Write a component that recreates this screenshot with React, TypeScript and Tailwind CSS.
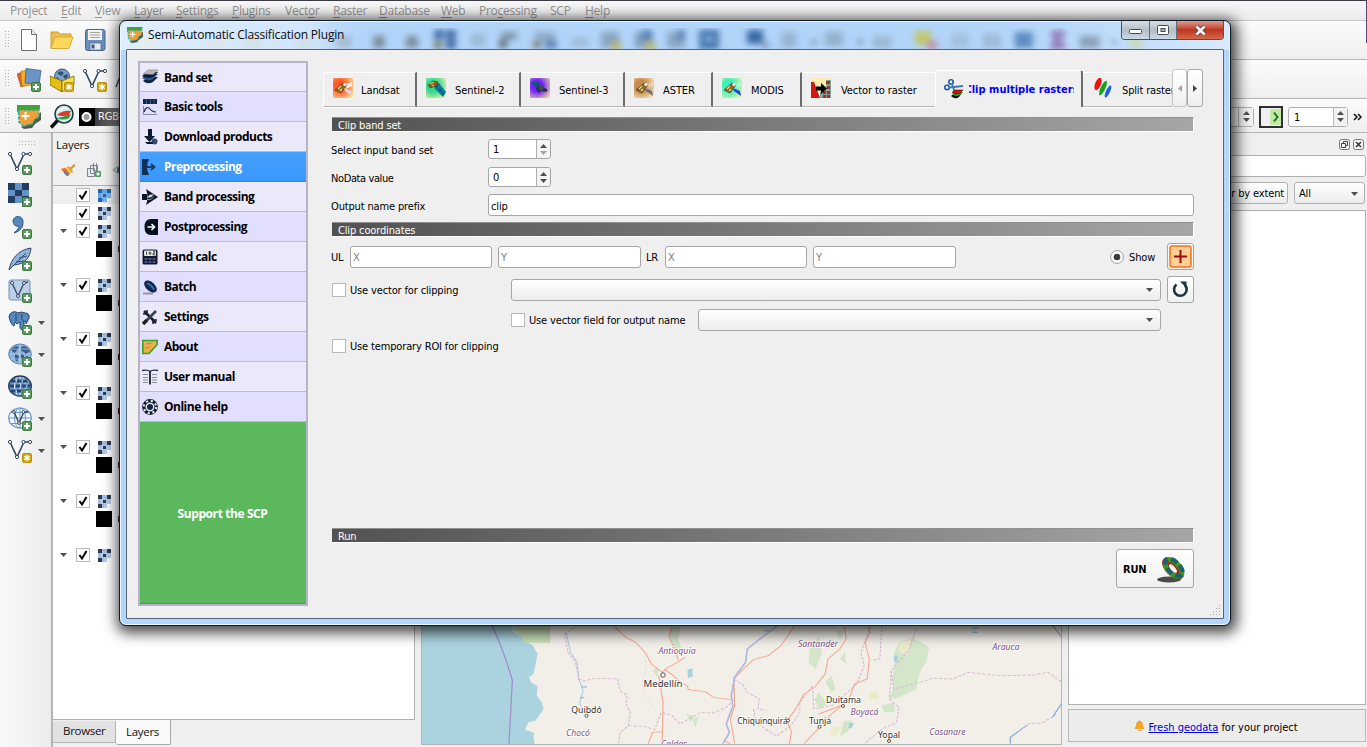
import React from "react";

const TAHOMA = "font-['DejaVu_Sans_Condensed','DejaVu_Sans',sans-serif] text-[11px] leading-[14px] tracking-[-0.15px]";
const SEGOE = "font-['Open_Sans','Noto_Sans',sans-serif] text-[12px] leading-[16px]";
const SEGOE_SM = "font-['Open_Sans','Noto_Sans',sans-serif] text-[11.5px] leading-[16px]";

/* ---------- small shared pieces ---------- */

function Grip() {
  return (
    <svg width="6" height="20" className="shrink-0">
      {[0, 1].map((c) =>
        [0, 1, 2, 3, 4, 5].map((r) => <rect key={`${c}-${r}`} x={c * 3} y={1 + r * 3} width="1" height="1" fill="#b0b0b0" />)
      )}
    </svg>
  );
}

function Plus() {
  return (
    <g>
      <rect x="14.5" y="14.5" width="9" height="9" rx="1.5" fill="#5b9b5e" stroke="#3f7a45" />
      <path d="M19 16v6M16 19h6" stroke="#fff" strokeWidth="2" />
    </g>
  );
}

function Star() {
  return (
    <g>
      <rect x="14.5" y="14.5" width="9" height="9" rx="1" fill="#d0a911" stroke="#b8930a" />
      <path d="M19 15.800v6.400M16.200 17.400l5.600 3.200M21.800 17.400l-5.600 3.200" stroke="#fff" strokeWidth="1.300" />
    </g>
  );
}

function VNodes() {
  return (
    <g>
      <path d="M2 3L9 18L16 3h6" fill="none" stroke="#33475f" strokeWidth="1.6" />
      <g fill="#fff" stroke="#33475f">
        <circle cx="2" cy="3" r="1.6" />
        <circle cx="9" cy="18" r="1.6" />
        <circle cx="15.5" cy="3" r="1.6" />
        <circle cx="22" cy="3" r="1.6" />
      </g>
    </g>
  );
}

function Caret({ up = false, light = false }: { up?: boolean; light?: boolean }) {
  return (
    <svg width="7" height="4" viewBox="0 0 7 4" className="block">
      <path d={up ? "M0 4L3.5 0L7 4z" : "M0 0L3.5 4L7 0z"} fill={light ? "#a0a0a0" : "#505050"} />
    </svg>
  );
}

/* ---------- main window: menu and toolbars ---------- */

const menus: [string, number][] = [
  ["Project", 3], ["Edit", 0], ["View", 0], ["Layer", 0], ["Settings", 0], ["Plugins", 0], ["Vector", 4],
  ["Raster", 0], ["Database", 0], ["Web", 0], ["Processing", 3], ["SCP", -1], ["Help", 0],
];
const menuWidths = [
  "w-[51px]", "w-[34px]", "w-[39px]", "w-[42px]", "w-[56px]", "w-[53px]", "w-[48px]",
  "w-[46px]", "w-[62px]", "w-[38px]", "w-[71px]", "w-[35px]", "w-[30px]",
];

function MenuBar() {
  return (
    <div className={`flex h-[20px] shrink-0 items-center border-t border-[#3a3a42] bg-gradient-to-b from-[#f6f6f6] to-[#ededed] pl-[10px] pt-[1px] tracking-[-0.25px] text-[#929292] ${SEGOE}`}>
      {menus.map(([m, u], i) => (
        <div key={m} className={`shrink-0 ${menuWidths[i]}`}>
          {u < 0 ? m : (<>{m.slice(0, u)}<span className="underline underline-offset-2">{m[u]}</span>{m.slice(u + 1)}</>)}
        </div>
      ))}
    </div>
  );
}

function ScpIcon({ size = 24 }: { size?: number }) {
  return (
    <svg width={size} height={size} viewBox="0 0 24 24">
      <path d="M0 0h23v4l-2 0v3H0z" fill="#3fa535" />
      <path d="M4 22l3 2 8-1 3-4 6-4V7l-3 3-6 8z" fill="#4e5b50" />
      <path d="M1.500 5h20.500v7l-4 2-3 5-9 2-4-4z" fill="#ee9f35" stroke="#28a9a0" strokeWidth="1.600" strokeDasharray="3 1.600" />
      <path d="M8.500 7v8M4.500 11h8" stroke="#fff" strokeWidth="1.800" />
    </svg>
  );
}

function Toolbars() {
  return (
    <div className="flex shrink-0 flex-col">
      <div className="flex h-[40px] items-center border-b border-t border-b-[#b5b5b5] border-t-[#c8c8c8] bg-gradient-to-b from-[#fbfbfb] to-[#efefef] pl-[5px]">
        <Grip />
        <svg width="18" height="22" viewBox="0 0 18 22" className="ml-[9px]">
          <path d="M1.500 .5h10l5 5V21.500h-15z" fill="#fff" stroke="#6e6e6e" />
          <path d="M11.500 .5v5h5" fill="#eee" stroke="#6e6e6e" />
        </svg>
        <svg width="24" height="20" viewBox="0 0 24 20" className="ml-[12px]">
          <path d="M1 18V2h7l2 2h11v4" fill="#e9c04a" stroke="#c79f35" />
          <path d="M1 18.500L5 7h18l-4 11.500z" fill="#fdd75c" stroke="#d9a93c" />
        </svg>
        <svg width="21" height="22" viewBox="0 0 21 22" className="ml-[11px]">
          <rect x=".5" y=".5" width="19.500" height="21" rx="2" fill="#6b8fbd" stroke="#46688f" />
          <rect x="3" y="1" width="14" height="10" fill="#f3f3f1" />
          <path d="M5 3.500h10M5 6h10M5 8.500h10" stroke="#a5a5a0" />
          <rect x="5" y="14" width="11" height="7" fill="#e7ebef" stroke="#46688f" strokeWidth=".7" />
          <rect x="6.500" y="15.500" width="3" height="4" fill="#35557d" />
        </svg>
      </div>
      <div className="flex h-[39px] items-center border-b border-[#b5b5b5] bg-gradient-to-b from-[#fbfbfb] to-[#efefef] pl-[5px]">
        <Grip />
        <svg width="25" height="24" viewBox="0 0 25 24" className="mt-[1px] ml-[6px]">
          <path d="M0 6l10-4 4 14-10 3z" fill="#d5662f" stroke="#a44b20" strokeWidth=".6" />
          <path d="M4 3l12-1 1 15-12 1z" fill="#f3b21d" stroke="#b88412" strokeWidth=".6" />
          <path d="M9 .5l15 2-2 14.500-14-2z" fill="#6b93c4" stroke="#41658f" strokeWidth=".8" />
          <Plus />
        </svg>
        <svg width="25" height="24" viewBox="0 0 25 24" className="mt-[1px] ml-[8px]">
          <circle cx="12" cy="8.500" r="7.500" fill="#7da0c8" stroke="#33557e" />
          <path d="M7 5l4-2 3 2-3 3zM13 8l4-2 1 3-3 2zM6 9l3 1-1 2z" fill="#2f4f78" />
          <path d="M0 8l12 5v11L0 17z" fill="#e5bf10" stroke="#7c6403" strokeWidth=".8" />
          <path d="M12 13l12-5v9l-12 7z" fill="#f8e04a" stroke="#7c6403" strokeWidth=".8" />
          <Star />
        </svg>
        <svg width="24" height="24" viewBox="0 0 24 24" className="mt-[1px] ml-[8px]"><VNodes /><Star /></svg>
        <svg width="10" height="24" viewBox="0 0 10 24" className="ml-[8px]"><path d="M1 20L6 7" stroke="#33475f" strokeWidth="1.500" /></svg>
      </div>
      <div className="flex h-[34px] items-center border-b border-[#b5b5b5] bg-gradient-to-b from-[#fbfbfb] to-[#efefef] pl-[5px] pt-[2px]">
        <Grip />
        <div className="ml-[6px]"><ScpIcon /></div>
        <svg width="25" height="25" viewBox="0 0 25 25" className="ml-[9px]">
          <path d="M1 23.500L9 15" stroke="#111" strokeWidth="3.500" />
          <circle cx="14" cy="10" r="9" fill="#cdeeee" stroke="#1d3c40" strokeWidth="1.600" />
          <path d="M7 14q6-1 14-4l-2 4q-6 3-12 0z" fill="#2e9a3a" />
          <path d="M7 11q6-5 14-4l-2 4q-6 2-12 0z" fill="#e5352b" />
          <path d="M8 7.500q4-3.500 9-3.500" stroke="#fff" strokeWidth="1.500" fill="none" />
        </svg>
        <div className="ml-[4px] flex h-[18px] w-[60px] items-center bg-gradient-to-r from-[#1a1a1a] via-[#5e5e5e] to-[#9a9a9a]">
          <svg width="16" height="18" viewBox="0 0 16 18"><rect width="16" height="18" fill="#000" /><circle cx="7.500" cy="9" r="4" fill="#999" stroke="#fff" strokeWidth="2" /></svg>
          <span className={`ml-[3px] pt-[1px] text-white ${TAHOMA}`}>RGB</span>
        </div>
        <div className="grow" />
        <div className="flex h-[20px] w-[60px] items-center rounded-[3px] border border-[#b0b0b0] bg-white">
          <div className="grow" />
          <div className="flex h-full w-[15px] flex-col items-center justify-center gap-[3px] border-l border-[#b8b8b8] bg-[#f2f2f2]"><Caret up /><Caret /></div>
        </div>
        <svg width="24" height="22" viewBox="0 0 24 22" className="ml-[5px]">
          <rect x="1" y="1" width="22" height="20" fill="#efefef" stroke="#2f2f33" strokeWidth="2" />
          <rect x="11" y="3" width="11" height="16" fill="#c3e8a8" />
          <path d="M15 6.500l3.500 4.500-3.500 4.500" fill="none" stroke="#17791c" strokeWidth="2" />
        </svg>
        <div className={`ml-[5px] flex h-[20px] w-[60px] items-center rounded-[3px] border border-[#b0b0b0] bg-white pl-[5px] ${TAHOMA}`}>
          <span className="grow pt-[2px]">1</span>
          <div className="flex h-full w-[14px] flex-col items-center justify-center gap-[3px] border-l border-[#b8b8b8] bg-[#f2f2f2]"><Caret up /><Caret /></div>
        </div>
        <svg width="9" height="8" viewBox="0 0 9 8" className="ml-[5px] mr-[5px]"><path d="M1 1l3 3-3 3M5 1l3 3-3 3" fill="none" stroke="#111" strokeWidth="1.500" /></svg>
      </div>
    </div>
  );
}

/* ---------- left icon strip ---------- */

const globe = (fill: string, line: string) => (
  <g fill="none" stroke={line}>
    <ellipse cx="12" cy="11" rx="11.300" ry="10" fill={fill} strokeWidth="1.200" />
    <ellipse cx="12" cy="11" rx="5.500" ry="10" />
    <path d="M1 11h22M3 5.500h18M3 16.500h18M12 1v20" />
  </g>
);

const strip: [React.ReactNode, boolean][] = [
  [<g><VNodes /><Plus /></g>, false],
  [<g shapeRendering="crispEdges">
    {["dmd", "mdm", "dmd"].flatMap((r, y) => r.split("").map((c, x) => (
      <rect key={`${x}${y}`} x={x * 7} y={y * 6.5} width="7" height="6.500" fill={c === "d" ? "#233d60" : "#6592c6"} />
    )))}
    <Plus /></g>, false],
  [<g><path d="M5 6a5 5 0 0 1 10 1c0 6-3 9-9 11c3-3 5-4.500 5-7c-3.500 1-6-1.500-6-5z" fill="#5686bd" stroke="#33587f" /><Plus /></g>, false],
  [<g><path d="M1 23C3 12 10 3 23 1C22 11 17 17 6 18z" fill="#93b4d8" stroke="#2d4a6c" /><path d="M1 23L18 6M8 15l8-1M11 11l8-2" stroke="#2d4a6c" fill="none" /><Plus /></g>, false],
  [<g><rect x="1" y="1" width="21" height="20" rx="2" fill="#b9d0e8" stroke="#6f90b4" /><path d="M4 4l6 13L16 4l4-1" fill="none" stroke="#33475f" strokeWidth="1.300" /><circle cx="4" cy="4" r="1.500" fill="#fff" stroke="#33475f" /><circle cx="10" cy="17" r="1.500" fill="#fff" stroke="#33475f" /><circle cx="16" cy="4" r="1.500" fill="#fff" stroke="#33475f" /><Plus /></g>, false],
  [<g><path d="M2 3q4-4 8-1q4-2 7 0q5 0 4 5l-3 6v-3l-2 1v7q-4 2-4-2v-5l-3 2-2-2-1 4q-3-1-5-9z" fill="#5788bd" stroke="#27466f" /><path d="M8 3v7M14 3q-2 5 2 8" stroke="#27466f" fill="none" /><Plus /></g>, true],
  [<g><ellipse cx="12" cy="11" rx="11.300" ry="10" fill="#8fb2d9" stroke="#5b81ad" /><path d="M3 6l3-2 3-1 2 2-2 2-2 3-2-1-1-1zM13 4l3-1 4 2 2 4-3 1-1 2-2-3-3-1zM7 11l3 1 1 2-2 5-2-3zM13 10l3 2 0 3-2 2-1-3zM18 13l2 0-1 2z" fill="#3a608f" /><path d="M1 11h22M12 1v20M3 6h18M3 16h18" stroke="#c5d9ee" strokeWidth=".6" /><Plus /></g>, true],
  [<g>{globe("#6f9bcc", "#dce9f6")}<path d="M3 6h18M1.500 11h21M3 16h18" stroke="#27466f" strokeWidth="3" strokeDasharray="4.500 1.500" /><ellipse cx="12" cy="11" rx="11.300" ry="10" fill="none" stroke="#223c5c" strokeWidth="1.400" /><Plus /></g>, false],
  [<g>{globe("#f2f7fc", "#6c98c9")}<path d="M6 5l5 11L16 5h4" fill="none" stroke="#33475f" strokeWidth="1.400" /><circle cx="6" cy="5" r="1.400" fill="#fff" stroke="#33475f" /><circle cx="11" cy="16" r="1.400" fill="#fff" stroke="#33475f" /><circle cx="15.500" cy="5" r="1.400" fill="#fff" stroke="#33475f" /><Plus /></g>, true],
  [<g><VNodes /><Star /></g>, true],
];

function IconStrip() {
  return (
    <div className="flex w-[51px] shrink-0 flex-col bg-gradient-to-r from-[#fafafa] to-[#ececec] pt-[8px]">
      <svg width="17" height="6" className="mb-[0px] ml-[19px]">
        {[0, 1, 2, 3, 4, 5].flatMap((c) => [0, 1].map((r) => <rect key={`${c}${r}`} x={c * 3} y={r * 3} width="1" height="1" fill="#b0b0b0" />))}
      </svg>
      {strip.map(([g, menu], i) => (
        <div key={i} className="flex h-[32px] items-center pl-[8px]">
          <svg width="24" height="24" viewBox="0 0 24 24">{g}</svg>
          {menu && <span className="ml-[6px]"><Caret /></span>}
        </div>
      ))}
    </div>
  );
}

/* ---------- layers dock ---------- */

function Check({ on = false }: { on?: boolean }) {
  return (
    <svg width="14" height="14" viewBox="0 0 14 14" className="shrink-0">
      <rect x=".5" y=".5" width="13" height="13" fill="#fff" stroke="#b9b9b9" />
      {on && <path d="M3.500 7l2.500 3.500L10.500 3" fill="none" stroke="#000" strokeWidth="2" />}
    </svg>
  );
}

function LayerIcon({ blue = false }: { blue?: boolean }) {
  const dark = blue ? "#2464a8" : "#2c3a50";
  const light = blue ? "#7db4ea" : "#b4cbe6";
  return (
    <svg width="13" height="13" viewBox="0 0 13 13">
      <rect width="13" height="9" fill={light} />
      <rect y="9" width="9" height="4" fill={light} />
      <path d="M0 0h4v4H0zM9 0h4v4H9zM0 9h4v4H0zM5 5h3v3H5z" fill={dark} />
      <path d="M4 0h5v4H4zM4 9h2v4H4zM0 4h3v5H0z" fill={blue ? "#4e97dd" : "#90b0d8"} fillOpacity=".5" />
    </svg>
  );
}

function LayerRow({ arrow, hot }: { arrow?: boolean; hot?: boolean }) {
  return (
    <div className={`flex h-[18px] items-center pl-[7px] ${hot ? "bg-[#efefef]" : ""}`}>
      <span className="w-[16px] pb-[1px]">{arrow && <Caret />}</span>
      <Check on />
      <span className="ml-[8px]"><LayerIcon blue={hot} /></span>
    </div>
  );
}

function Swatch() {
  return (
    <div className="flex h-[36px] pl-[43px] pt-[1px]">
      <span className="h-[16px] w-[16px] bg-black" />
      <span className="mt-[5px] ml-[6px] h-[6px] w-[1px] bg-[#5a1d49]" />
    </div>
  );
}

function LayersDock() {
  return (
    <div className="flex w-[364px] shrink-0 flex-col border-l-2 border-[#b4b4b4]">
      <div className={`h-[21px] pt-[4px] pl-[3px] tracking-[-0.25px] text-[#111] ${SEGOE_SM}`}>Layers</div>
      <div className="flex h-[31px] items-center gap-[10px] pl-[7px]">
        <svg width="16" height="14" viewBox="0 0 16 14">
          <path d="M9 6l5-5 1.500 1.500-5 5z" fill="#c9963f" />
          <path d="M1 6l6-2 5 5-5 4z" fill="#f4d03c" />
          <path d="M1 6l4-1 5 6-3 2z" fill="#e8643a" />
          <path d="M7 4l2-1 4 5-1 2z" fill="#e0a24a" />
          <path d="M4 10l3 3 2-1-4-4z" fill="#4e80c0" />
        </svg>
        <svg width="16" height="16" viewBox="0 0 16 16">
          <path d="M1.500 6.500h7v8h-7zM4.500 3.500h7v8h-7z" fill="#e7eaee" stroke="#7d858e" />
          <path d="M7.500 1v8h3V1" fill="none" stroke="#7d858e" />
          <rect x="9" y="9" width="6" height="6" rx="1" fill="#5b9b5e" />
          <path d="M12 10v4M10 12h4" stroke="#fff" />
        </svg>
        <svg width="16" height="12" viewBox="0 0 16 12"><path d="M1 6q7-7 14 0q-7 6-14 0z" fill="#dfe5ea" stroke="#8c949b" /><circle cx="8" cy="6" r="3" fill="#3f6d9c" /></svg>
      </div>
      <div className="flex h-[535px] flex-col border border-l-0 border-[#b0b0b0] bg-white">
        <LayerRow hot />
        <LayerRow />
        {[0, 1, 2, 3, 4, 5].map((i) => (<React.Fragment key={i}><LayerRow arrow /><Swatch /></React.Fragment>))}
        <LayerRow arrow />
      </div>
      <div className={`flex h-[26px] tracking-[-0.3px] text-[#111] ${SEGOE_SM}`}>
        <div className="mt-[1px] h-[22px] w-[63px] border-r border-b border-[#b4b4b4] bg-[#e2e2e2] pt-[2px] pl-[10px]">Browser</div>
        <div className="h-[25px] w-[55px] rounded-b-[2px] border-r border-b border-[#a8a8a8] bg-[#fafafa] pt-[4px] pl-[10px]">Layers</div>
      </div>
    </div>
  );
}

/* ---------- map canvas ---------- */

function MapCanvas() {
  return (
    <svg width="640" height="126" viewBox="0 0 640 126" className="block">
      <rect width="641" height="126" fill="#f2efe9" />
      <g transform="translate(-11.500 -19) scale(.42092 .33333)">
        <path d="M20 50H240L243 98L268 112L275 130L290 138L302 165L298 190L292 225L282 235L286 250L302 262L300 290L312 310L316 330L304 352L296 365L280 370L272 392L294 402L292 418L296 440H20z" fill="#aad3df" />
        <path d="M243 50H332V131H270L262 108L245 95z" fill="#c9dfb8" />
        <path d="M620 80l22 5-6 35 10 40-18-10-12-35zM948 150l22-40 8 50-16 50-16-20zM1160 130l20-10 12-5 40 30-6 40-14 30-10 40-20 25-30-5-8-30 6-50-2-30zM1150 260l30-10 24 0-2 20-40 25-25 5zM985 250l15-20 10 40-10 10zM960 300l10-20 20 35-20 15zM1120 320l30-10 0 30-25 0zM1020 180l12-20 4 35zM575 215l15-15-4 35zM1030 365l20 0-12 35-18 10zM670 360l15-5-8 30zM1010 95l20 0-10 28zM655 345l20 5-10 20z" fill="#d3e6c9" />
        <path d="M1160 130l30-10-8 50-20-10zM1088 280l20-5 5 25-20 0zM1000 385l25-5-15 30-15 0z" fill="#e9ebcb" />
        <path d="M658 212l12-4 0 25-11 4zM1150 168l8 3-2 20-8-6zM1042 372l12 0-6 16-8 0z" fill="#a8cfe2" />
        <g fill="none">
          <path d="M192 75Q222 155 242 245L234 434" stroke="#a18dcb" strokeWidth="3" />
          <path d="M370 100L380 160L396 190L400 240L410 275L402 310L412 345" stroke="#a9c8e8" strokeWidth="2.500" />
          <path d="M552 140L560 200L550 260L568 310L585 340M598 260L594 300" stroke="#d5e2ea" strokeWidth="1.500" />
          <path d="M398 80L366 105L374 160L392 190L400 240L412 246L440 238L492 240L498 275L515 290L512 315L522 340L518 380L498 400L494 434M518 380L555 382L580 392L596 340L622 350L640 375L690 340L720 342L750 325L770 300L768 240L790 258L800 280L828 300L826 330L846 334M815 330L820 370L870 412L905 378L925 340L925 310L955 260L958 330L1005 318L1060 255L1078 200L1070 160L1095 75M1120 80L1115 180L1095 184M1205 75L1185 150L1142 215L1148 270L1210 250L1240 238L1290 240L1325 220L1400 230L1480 228L1515 220L1548 250M1142 215L1138 300L1160 325L1155 370L1120 390L1078 434M1548 310L1530 350L1500 372L1470 374L1425 415" stroke="#d9b3d6" strokeWidth="2.600" strokeDasharray="8 4" />
          <path d="M484 75L490 90L512 115L535 130L560 165L572 195L598 220L606 210L634 190L652 175M622 75L614 115L628 150L636 184M604 212L625 230L640 250L658 260L660 272L700 278L720 295L764 302M590 230L600 310L598 430M565 434L575 400L598 398M915 75L880 140L850 170L815 182L795 205L768 240L770 320L760 360L770 434M1030 75L1035 120L1020 150L992 180L985 225L960 265L935 285L915 330L895 365L905 400L900 434M1086 75L1092 100L1080 130L1090 180L1085 240L1055 255L1045 290L1027 318L1000 345L975 380L935 434M970 345L1027 318M760 434L745 425" stroke="#f7a58e" strokeWidth="2.600" />
          <path d="M880 72L830 120L800 150L796 190L770 235L762 290L766 320L750 375L758 400L742 434" stroke="#b0b7de" strokeWidth="4" />
          <path d="M1548 310L1525 355M1465 378L1425 415V434M840 95h12M1335 88h12M1335 100h12M405 264h14M403 296h10" stroke="#7fb0e2" strokeWidth="3" />
          <path d="M1523 75L1548 115M1480 72q10 12 18 0" stroke="#cba5d2" strokeWidth="4" />
        </g>
      </g>
      <g fontFamily="'Noto Sans','Open Sans',sans-serif" textAnchor="middle" stroke="#fff" strokeWidth="2" paintOrder="stroke" strokeOpacity=".7">
        <g fill="#85578f" fontStyle="italic" fontSize="8.700">
          <text x="255" y="35.500">Antioquia</text>
          <text x="396" y="29">Santander</text>
          <text x="584" y="32">Arauca</text>
          <text x="442.500" y="97">Boyacá</text>
          <text x="156" y="118">Chocó</text>
          <text x="525.500" y="117">Casanare</text>
          <text x="252" y="129">Caldas</text>
        </g>
        <g fill="#333" fontSize="8.700">
          <text x="241" y="69" fontSize="9.600">Medellín</text>
          <text x="164.500" y="95">Quibdó</text>
          <text x="340.500" y="106" fontSize="8.300">Chiquinquirá</text>
          <text x="398" y="106">Tunja</text>
          <text x="421.500" y="85">Duitama</text>
          <text x="467" y="120">Yopal</text>
        </g>
      </g>
      <g fill="#fff" stroke="#555">
        <circle cx="241" cy="57" r="2.200" /><circle cx="164.500" cy="97.800" r="1.500" /><circle cx="366" cy="102.500" r="1.500" />
        <circle cx="397.500" cy="108.800" r="1.500" /><circle cx="421" cy="88" r="1.500" /><circle cx="467" cy="123" r="1.500" />
      </g>
    </svg>
  );
}

/* ---------- processing dock ---------- */

function RightDock() {
  return (
    <div className={`flex w-[298px] shrink-0 flex-col ${TAHOMA}`}>
      <div className="flex h-[22px] items-center justify-end gap-[3px] pr-[2px]">
        <svg width="11" height="11" viewBox="0 0 11 11"><rect x=".5" y=".5" width="10" height="10" rx="2" fill="#f5f5f5" stroke="#777" /><path d="M4.500 5V2.500h4v4H6M2.500 4.500h4v4h-4z" fill="none" stroke="#444" /></svg>
        <svg width="11" height="11" viewBox="0 0 11 11"><rect x=".5" y=".5" width="10" height="10" rx="2" fill="#f5f5f5" stroke="#777" /><path d="M3 3l5 5M8 3l-5 5" stroke="#333" strokeWidth="1.500" /></svg>
      </div>
      <div className="h-[22px] rounded-[3px] border border-[#b0b0b0] bg-white" />
      <div className="flex h-[33px] items-start gap-[6px] pt-[5px]">
        <div className="flex h-[22px] w-[220px] items-center justify-end rounded-[3px] border border-[#b0b0b0] bg-gradient-to-b from-white to-[#ececec] pt-[1px] pr-[3px]">Filter by extent</div>
        <div className="flex h-[22px] w-[71px] items-center justify-between rounded-[3px] border border-[#b0b0b0] bg-gradient-to-b from-white to-[#ececec] pt-[1px] pr-[6px] pl-[4px]">All<Caret /></div>
      </div>
      <div className="h-[495px] border border-[#b0b0b0] bg-white" />
      <div className="mt-[4px] flex h-[33px] items-center justify-center border border-[#b8b8b8] bg-[#ececec] pt-[5px] pr-[2px] tracking-[-0.02px] text-black">
        <svg width="11" height="12" viewBox="0 0 11 12" className="mr-[3px] mb-[4px]"><path d="M5.500 .5q3.500 1 3.500 5l1.500 3.500H.5L2 5.500q0-4 3.500-5z" fill="#f7a428" /><path d="M4 10h3l-1.500 1.500z" fill="#e08a12" /></svg>
        <span className="text-[#0000e0] underline">Fresh geodata</span>&nbsp;for your project
      </div>
    </div>
  );
}

/* ---------- dialog ---------- */

const side: [string, React.ReactNode][] = [
  ["Band set", <g><path d="M1 12l5-4h10l-5 5q-5 3-10-1z" fill="#10233f" /><path d="M0 9l5-4h11l-5 5q-6 3-11-1z" fill="#2b5698" /><path d="M0 7l5-4h11l-5 5q-6 2-11-1z" fill="#0c1a30" /><path d="M1 5l5-4h10l-5 4.500z" fill="#b8b8bc" stroke="#777" strokeWidth=".5" /></g>],
  ["Basic tools", <g><rect x="1" y="0" width="14" height="5" fill="#12263f" /><path d="M4.500 0v5M8.500 0v5M12 0v5" stroke="#3b6db0" strokeWidth=".8" /><path d="M1.500 7v8.500H15" fill="none" stroke="#889" /><path d="M2 13q2-6 5-4q3 4 7 4" fill="none" stroke="#223" strokeWidth="1.200" /></g>],
  ["Download products", <g><path d="M6 0h4v7h3l-5.500 6L2 7h4z" fill="#0c1b2f" /><circle cx="12.500" cy="12.500" r="3" fill="#2e4e78" /><path d="M3 13h8v2H5z" fill="#0c1b2f" /></g>],
  ["Preprocessing", <g><path d="M0 0h7q-4 8 0 16H0z" fill="#123057" /><path d="M5 8h7M9 5l3.500 3L9 11" fill="none" stroke="#163d70" strokeWidth="1.800" /></g>],
  ["Band processing", <g><path d="M4 0l12 8-12 8q3-8 0-16z" fill="#0b1626" /><path d="M0 5h5v6H0z" fill="#0b1626" /><path d="M5 8.500l3-3h4l-3 3z" fill="#d0d8e4" /><path d="M5 10.500l4 0 3-3" stroke="#7a93b8" fill="none" /></g>],
  ["Postprocessing", <g><path d="M16 0H9Q2.500 0 2.500 8t6.500 8h7z" fill="#06101f" /><path d="M5.500 8h7M9.500 5l3 3-3 3" fill="none" stroke="#fff" strokeWidth="1.600" /></g>],
  ["Band calc", <g><rect x=".5" y=".5" width="15" height="15" rx="1.500" fill="#141a2a" /><rect x="2" y="1.500" width="12" height="5.500" rx="1" fill="#e7e9e6" /><path d="M4.500 2.500v3.500M8 2.500v3.500M6.500 4.200h3M11 2.500h1.500v1.800H11v1.500h2" stroke="#222" strokeWidth=".8" fill="none" /><path d="M2.500 10h11M2.500 13h11" stroke="#4a5096" strokeWidth="1.800" strokeDasharray="3 1" /></g>],
  ["Batch", <g><path d="M1 14.500h10" stroke="#999" strokeWidth="2" /><ellipse cx="8.500" cy="7.500" rx="7.500" ry="4.500" transform="rotate(42 8.500 7.500)" fill="#12294d" /><path d="M5 4.500q4 1 7 6" fill="none" stroke="#3d76c4" strokeWidth="1.800" /></g>],
  ["Settings", <g><path d="M2 2l12 12" stroke="#1a222c" strokeWidth="2.600" /><path d="M14 2L3 13" stroke="#39434d" strokeWidth="2.600" /><path d="M1 5l4 0 0-4M11 15v-4h4" fill="none" stroke="#1a222c" strokeWidth="1.600" /><path d="M5 11l-4 4" stroke="#222" strokeWidth="3.600" /></g>],
  ["About", <g><path d="M.8 1.500h14.400v4L7 14.500H.8z" fill="#efae4b" stroke="#35a52b" strokeWidth="1.600" /><path d="M4 5l6-1M3 9l5-1" stroke="#a89060" /></g>],
  ["User manual", <g><path d="M8 2v13.500" stroke="#2a3340" strokeWidth="2" /><path d="M0 1.500q6-1 8 1q2-2 8-1" fill="none" stroke="#2a3340" strokeWidth="1.300" /><path d="M1 5.500h5M1 8.500h5M1 11h5M10 5.500h5M10 8.500h5M10 11h5M1 13.500h5M10 13.500h5" stroke="#8a8f98" strokeWidth="1.200" /></g>],
  ["Online help", <g><circle cx="8" cy="8" r="6.200" fill="#e6e8f2" stroke="#111a28" strokeWidth="3.400" /><circle cx="8" cy="8" r="6.200" fill="none" stroke="#e6e8f2" strokeWidth="2" strokeDasharray="2.200 2.670" /><circle cx="8" cy="8" r="3" fill="#12263f" /></g>],
];

function Sidebar() {
  return (
    <div className={`mt-[11px] ml-[11px] flex h-[545px] w-[170px] shrink-0 flex-col border-2 border-[#b6b4c8] font-bold tracking-[-0.5px] ${SEGOE}`}>
      {side.map(([label, icon], i) => (
        <div
          key={label}
          className={`flex shrink-0 items-center border-b pl-[2px] ${i === 0 ? "h-[29px]" : "h-[30px]"} ${
            i === 3 ? "border-[#2f8ae8] bg-gradient-to-b from-[#45a0ff] to-[#3a97fc] text-white" : i % 2 ? "border-[#bcbad0] bg-[#e1dffd] text-black" : "border-[#bcbad0] bg-[#ebe8fa] text-black"
          }`}
        >
          <svg width="16" height="16" viewBox="0 0 16 16" className="shrink-0">{icon}</svg>
          <span className="mt-[1px] ml-[6px]">{label}</span>
        </div>
      ))}
      <div className="flex grow items-center justify-center border-b border-[#4a9c4e] bg-[#5cb85c] pt-[3px] pr-[1px] tracking-[-0.4px] text-white">Support the SCP</div>
    </div>
  );
}

interface Sat { id: string; a: string; b: string; panel: string; body: string; left?: string }

function SatIcon({ id, a, b, panel, body, left }: Sat) {
  return (
    <svg width="20" height="20" viewBox="0 0 20 20" className="shrink-0">
      <defs>
        <radialGradient id={id} cx=".35" cy=".4" r=".8"><stop offset="0" stopColor={a} /><stop offset=".35" stopColor={a} /><stop offset="1" stopColor={b} /></radialGradient>
      </defs>
      <rect width="20" height="20" rx="1" fill={`url(#${id})`} />
      {left && <path d="M1 4h8l2 4-6 1z" fill={left} />}
      {id === "sentinel2" ? (
        <g>
          <path d="M8 6l5-1 7 9-3 5-8-8z" fill={panel} />
          <path d="M10 8l8 9M13 6l-3 4M16 10l-3 4M18.500 13l-3 4" stroke="#0a4a70" strokeWidth=".8" />
          <path d="M2 7l5-4 5 1-2 4-6 2z" fill={body} stroke="#3a2c08" strokeWidth=".5" />
          <path d="M4 6l4-2M6 8l2-1" stroke="#e8d8a0" />
        </g>
      ) : id === "sentinel3" ? (
        <g>
          <path d="M6 11q1-4 6-3l6 4-2 2-5-1-2 2z" fill={panel} />
          <circle cx="11" cy="10" r="2.500" fill={body} />
        </g>
      ) : (
        <g>
          <path d="M12 6l7-2v4l-6 3z" fill={left ? panel : "#fff"} fillOpacity={id === "landsat" ? ".8" : ".35"} />
          <path d="M2 12l8-7 4 2-6 8z" fill={body} stroke="#40361a" strokeWidth=".6" />
          <path d="M5 11l3-3M7 13l2-2" stroke="#f0dc9c" strokeWidth="1.200" />
          <path d="M11 10l7 3 1 5-7-5z" fill={id === "landsat" ? "#dcdcd8" : panel} />
          <circle cx="12" cy="6.500" r="1.800" fill="#e6e6e0" />
        </g>
      )}
    </svg>
  );
}

const tabs: { label: string; icon: React.ReactNode; w: string; gap: string }[] = [
  { label: "Landsat", w: "w-[94px]", gap: "ml-[8px]", icon: <SatIcon id="landsat" a="#ff5a2a" b="#fbe3a0" panel="#7fb0a0" body="#96661c" /> },
  { label: "Sentinel-2", w: "w-[104px]", gap: "ml-[9px]", icon: <SatIcon id="sentinel2" a="#30d890" b="#f0f0a8" panel="#0c7f9c" body="#8a6412" /> },
  { label: "Sentinel-3", w: "w-[104px]", gap: "ml-[9px]", icon: <SatIcon id="sentinel3" a="#7020f8" b="#f1d7a0" panel="#2b3145" body="#44485c" left="#0f5a78" /> },
  { label: "ASTER", w: "w-[88px]", gap: "ml-[9px]", icon: <SatIcon id="aster" a="#c88a48" b="#f8ecc8" panel="#6a7078" body="#8a6a35" /> },
  { label: "MODIS", w: "w-[89px]", gap: "ml-[9px]", icon: <SatIcon id="modis" a="#40f0b8" b="#e8f8b0" panel="#2f3fd0" body="#8a6420" /> },
  {
    label: "Vector to raster", w: "w-[133px]", gap: "ml-[10px]",
    icon: (
      <svg width="20" height="20" viewBox="0 0 20 20" className="shrink-0">
        <rect width="20" height="20" fill="#fdeeae" />
        <path d="M0 4h3l6 16H0z" fill="#d01818" />
        <path d="M15 2h5v18H9v-6h3v-4h3z" fill="#7aa79b" />
        <path d="M15 3h4v3h-4zM16 8h3v3h-3zM12 13h3v3h-3zM16 13h3v3h-3zM12 17h3v3h-3zM16 17h3v3h-3z" fill="#c02020" />
        <path d="M5 8.500h5V5l6 5.500-6 5.500v-3.500H5z" fill="#000" />
      </svg>
    ),
  },
];

function TabBar() {
  return (
    <div className={`flex h-[37px] w-[880px] items-end text-black ${TAHOMA}`}>
      {tabs.map((t, i) => (
        <div key={t.label} className={`flex h-[35px] shrink-0 items-center border-t border-b border-t-white border-b-[#b5b5b5] shadow-[0_1px_0_#fff] ${i === 0 ? "rounded-tl-[4px] border-l border-l-white" : ""} ${i < 5 ? "border-r-2 border-r-[#6c6c6c]" : ""} pb-[3px] pl-[9px] ${t.w}`}>
          {t.icon}
          <span className={`${t.gap} mt-[5px] tracking-[-0.08px]`}>{t.label}</span>
        </div>
      ))}
      <div className="flex h-[37px] w-[148px] shrink-0 items-center rounded-t-[3px] border-t border-r-2 border-l border-t-white border-l-white border-r-[#6c6c6c] pb-[1px] pl-[8px] font-bold text-[#0000ff]">
        <svg width="20" height="20" viewBox="0 0 20 20" className="shrink-0">
          <circle cx="7" cy="3" r="2.200" fill="none" stroke="#1c5a9c" strokeWidth="1.600" />
          <circle cx="3" cy="8.500" r="2.200" fill="none" stroke="#1c5a9c" strokeWidth="1.600" />
          <path d="M8 5l3 9M5 8.500l14-1.500" stroke="#3d7ab0" strokeWidth="1.800" />
          <path d="M7 17l4-3h7l-3 4q-4 3-8-1z" fill="#111" />
          <path d="M8 15.500l3-2.500h8l-3 3q-4 2-8-.5z" fill="#22a32a" />
          <path d="M8 13.500l3-2.500h8l-3 3q-4 2-8-.5z" fill="#d41414" stroke="#400" strokeWidth=".6" />
        </svg>
        <div className="mt-[2px] ml-[5px] flex w-[105px] justify-center overflow-hidden tracking-[0.02px] whitespace-nowrap"><span>Clip multiple rasters</span></div>
      </div>
      <div className="flex h-[35px] w-[89px] shrink-0 items-center overflow-hidden border-t border-b border-t-white border-b-[#b5b5b5] pb-[3px] pl-[10px] shadow-[0_1px_0_#fff]">
        <svg width="20" height="20" viewBox="0 0 20 20" className="shrink-0">
          <ellipse cx="5" cy="6" rx="2.900" ry="6.500" transform="rotate(22 5 6)" fill="#f01010" />
          <ellipse cx="10" cy="10" rx="2.300" ry="8" transform="rotate(25 10 10)" fill="#10a818" />
          <ellipse cx="15" cy="13.500" rx="2" ry="6.500" transform="rotate(25 15 13.500)" fill="#1560e0" />
        </svg>
        <span className="mt-[5px] ml-[9px] whitespace-nowrap">Split raster bands</span>
      </div>
      <div className="flex h-[38px] w-[31px] shrink-0">
        <div className="flex w-[15px] items-center justify-center rounded-[3px] border border-[#c4c4c4] bg-gradient-to-b from-white to-[#efefef]"><svg width="4" height="7"><path d="M4 0v7L0 3.500z" fill="#a0a0a0" /></svg></div>
        <div className="flex w-[16px] items-center justify-center rounded-[3px] border border-[#a8a8a8] bg-gradient-to-b from-white to-[#efefef]"><svg width="4" height="7"><path d="M0 0v7L4 3.500z" fill="#444" /></svg></div>
      </div>
    </div>
  );
}

function SectionBar({ title, className }: { title: string; className: string }) {
  return (
    <div className={`ml-[9px] flex h-[15px] w-[862px] items-center border-t border-r border-b border-t-[#909090] border-r-white border-b-white bg-gradient-to-r from-[#525252] to-[#a6a6a6] pt-[2px] pl-[6px] text-white ${className}`}>
      {title}
    </div>
  );
}

function Spin({ value, dim }: { value: string; dim?: boolean }) {
  return (
    <div className="flex h-[20px] w-[63px] items-center rounded-[3px] border border-[#a6a6a6] bg-white pl-[4px]">
      <span className="grow pt-[2px]">{value}</span>
      <div className="flex h-full w-[14px] flex-col items-center justify-center gap-[3px] rounded-r-[3px] border-l border-[#b0b0b0] bg-[#f4f4f4]"><Caret up /><Caret light={dim} /></div>
    </div>
  );
}

const FIELD = "flex h-[22px] items-center rounded-[3px] border border-[#a6a6a6] bg-white pl-[2px] pt-[3px]";
const COMBO = "flex h-[22px] items-center justify-end rounded-[3px] border border-[#a6a6a6] bg-gradient-to-b from-white to-[#ececec] pr-[7px]";
const BTN = "flex h-[27px] w-[27px] shrink-0 items-center justify-center rounded-[3px] border border-[#a6a6a6] bg-gradient-to-b from-white to-[#f0f0f0]";

function ClipForm() {
  return (
    <div className={`flex flex-col text-black ${TAHOMA}`}>
      <SectionBar title="Clip band set" className="mt-[10px]" />
      <div className="mt-[6px] flex flex-col gap-[6px] pl-[8px]">
        <div className="flex h-[22px] items-center"><span className="w-[157px] pt-[3px]">Select input band set</span><Spin value="1" dim /></div>
        <div className="flex h-[22px] items-center"><span className="w-[157px] pt-[3px] tracking-[-0.4px]">NoData value</span><Spin value="0" /></div>
        <div className="flex h-[22px] items-center"><span className="w-[157px] pt-[3px]">Output name prefix</span><div className={`w-[706px] ${FIELD} text-black`}>clip</div></div>
      </div>
      <SectionBar title="Clip coordinates" className="mt-[6px]" />
      <div className="mt-[6px] flex h-[27px] items-center pl-[8px]">
        <span className="w-[19px] pt-[2px]">UL</span>
        <div className={`w-[142px] text-[#808080] ${FIELD}`}>X</div>
        <div className={`ml-[6px] w-[143px] text-[#808080] ${FIELD}`}>Y</div>
        <span className="ml-[5px] w-[19px] pt-[2px]">LR</span>
        <div className={`w-[142px] text-[#808080] ${FIELD}`}>X</div>
        <div className={`ml-[6px] w-[143px] text-[#808080] ${FIELD}`}>Y</div>
        <svg width="14" height="14" viewBox="0 0 14 14" className="ml-[154px]"><circle cx="7" cy="7" r="6.400" fill="#fff" stroke="#9c9c9c" /><circle cx="7" cy="7" r="3.300" fill="#3c3c3c" /></svg>
        <span className="ml-[5px] w-[38px] pt-[2px]">Show</span>
        <div className={BTN}>
          <svg width="23" height="23" viewBox="0 0 23 23"><rect x="1" y="1" width="21" height="21" rx="2" fill="#ffcf96" stroke="#f2741c" strokeWidth="1.500" /><path d="M11.500 5v13M5 11.500h13" stroke="#9a0d0d" strokeWidth="2" /></svg>
        </div>
      </div>
      <div className="mt-[6px] flex h-[27px] items-center pl-[9px]">
        <Check /><span className="ml-[4px] w-[161px] pt-[2px]">Use vector for clipping</span>
        <div className={`w-[650px] ${COMBO}`}><Caret /></div>
        <div className={`ml-[6px] ${BTN}`}>
          <svg width="17" height="17" viewBox="0 0 17 17"><path d="M4.500 3.500A6.300 6.300 0 1 0 12.800 4" fill="none" stroke="#1c3640" strokeWidth="2.600" /><path d="M8 .5h6.500v6.500z" fill="#1c3640" /></svg>
        </div>
      </div>
      <div className="mt-[6px] flex h-[22px] items-center pl-[188px]">
        <Check /><span className="ml-[4px] w-[169px] pt-[2px]">Use vector field for output name</span>
        <div className={`w-[463px] ${COMBO}`}><Caret /></div>
      </div>
      <div className="mt-[8px] flex h-[14px] items-center pl-[9px]">
        <Check /><span className="ml-[4px] pt-[2px]">Use temporary ROI for clipping</span>
      </div>
      <SectionBar title="Run" className="mt-[175px]" />
      <div className="mt-[6px] flex justify-end pr-[9px]">
        <div className="flex h-[39px] w-[78px] items-center rounded-[3px] border border-[#a6a6a6] bg-gradient-to-b from-white to-[#f0f0f0] pl-[6px] font-bold">
          <span className="pt-[2px]">RUN</span>
          <svg width="32" height="30" viewBox="0 0 32 30" className="ml-[10px]">
            <ellipse cx="12" cy="25.500" rx="12" ry="3" fill="#4a4a4a" />
            <ellipse cx="16" cy="14.500" rx="13.500" ry="7.500" transform="rotate(45 16 14.500)" fill="#b31a14" />
            <ellipse cx="16.500" cy="14" rx="10.500" ry="5.500" transform="rotate(45 16.500 14)" fill="none" stroke="#3c9a18" strokeWidth="5" />
            <ellipse cx="17" cy="13.500" rx="11" ry="5.500" transform="rotate(45 17 13.500)" fill="none" stroke="#1f5f72" strokeWidth="4.500" strokeDasharray="7 3.500" />
            <ellipse cx="16" cy="14.500" rx="5.500" ry="2.200" transform="rotate(48 16 14.500)" fill="#f6f6f6" />
          </svg>
        </div>
      </div>
    </div>
  );
}

const ghosts: [number, number, number, number, string][] = [
  [20, 14, 16, 14, "#e2d59a"], [84, 18, 18, 10, "#c6bfa0"], [123, 14, 18, 12, "#a8bfa0"], [175, 14, 16, 12, "#a9bd90"], [214, 14, 16, 12, "#93a9c0"],
  [252, 14, 12, 12, "#7f8d9c"], [285, 14, 12, 12, "#7f8d9c"], [313, 8, 10, 9, "#3d6aa5"], [325, 8, 10, 9, "#3d6aa5"], [313, 19, 8, 8, "#78806a"], [325, 18, 10, 9, "#3d6aa5"],
  [350, 12, 14, 12, "#9db9d6"], [380, 10, 16, 8, "#8295aa"], [378, 18, 8, 8, "#5f6f7c"], [414, 10, 20, 8, "#8fa9c4"], [412, 19, 8, 7, "#77786a"], [424, 18, 12, 9, "#5f86b8"],
  [450, 16, 18, 8, "#9db9d6"], [480, 10, 18, 16, "#8aa4c0"], [490, 20, 10, 8, "#b8b75c"], [514, 10, 18, 16, "#809dc0"], [522, 8, 8, 10, "#4c78b0"], [524, 20, 10, 8, "#b8b75c"],
  [546, 10, 18, 16, "#8aa6c4"], [556, 8, 8, 10, "#5a82b4"], [578, 8, 20, 7, "#3d6fa8"], [578, 19, 20, 8, "#3d6fa8"], [578, 12, 6, 10, "#4b7bb2"], [592, 12, 6, 10, "#4b7bb2"],
  [626, 8, 16, 14, "#3a68a4"], [642, 20, 6, 6, "#7a95b0"], [660, 10, 16, 16, "#98b6d4"], [690, 18, 6, 4, "#7b90a8"], [704, 10, 18, 14, "#94b0cc"], [736, 18, 6, 4, "#7b90a8"], [752, 14, 18, 12, "#9cb8d4"],
  [794, 9, 16, 14, "#c2c76a"], [806, 19, 10, 8, "#c38aa0"], [830, 12, 18, 14, "#a4c0de"], [862, 12, 18, 14, "#9cb6d2"],
  [894, 10, 18, 16, "#4577b4"], [930, 9, 14, 6, "#74408e"], [930, 20, 14, 7, "#74408e"], [933, 14, 7, 8, "#84579c"], [959, 14, 20, 12, "#62758c"], [990, 18, 6, 4, "#62758c"], [1008, 16, 14, 10, "#b7c878"],
];

function Dialog() {
  return (
    <div className="absolute top-[20px] left-[119px] flex h-[606px] w-[1112px] flex-col overflow-visible rounded-[7px] border border-[#111a24] bg-[#b4d6fa] px-[6px] pb-[6px] shadow-[inset_0_0_0_1px_#e9f5ff,2px_3px_14px_4px_rgba(0,0,0,0.72)]">
      <svg width="1108" height="28" className="absolute top-[1px] left-[1px] overflow-hidden rounded-t-[5px]">
        <defs>
          <filter id="soft"><feGaussianBlur stdDeviation="3" /></filter>
          <linearGradient id="haze"><stop offset="0" stopColor="#e8f3ff" stopOpacity=".85" /><stop offset=".17" stopColor="#dcebfd" stopOpacity=".75" /><stop offset=".23" stopColor="#b4d6fa" stopOpacity="0" /><stop offset=".75" stopColor="#b4d6fa" stopOpacity="0" /><stop offset="1" stopColor="#e3f1ff" stopOpacity=".8" /></linearGradient>
        </defs>
        <rect width="1108" height="28" fill="#b1d4f9" />
        <g filter="url(#soft)">
          {ghosts.map(([x, y, w, h, c], i) => <rect key={i} x={x} y={y} width={w} height={h} fill={c} />)}
        </g>
        <rect width="1108" height="28" fill="url(#haze)" />
      </svg>
      <div className="relative flex h-[28px] shrink-0 items-start">
        <div className="flex grow items-center pt-[6px] pl-[1px]">
          <ScpIcon size={16} />
          <span className={`ml-[5px] tracking-[-0.17px] text-[#0c0c10] ${SEGOE}`}>Semi-Automatic Classification Plugin</span>
        </div>
        <div className="flex h-[19px] overflow-hidden rounded-b-[4px] border border-t-0 border-[#47525f]">
          <div className="flex w-[28px] items-center justify-center border-r border-[#606c7a] bg-gradient-to-b from-[#d9dfe4] via-[#b4bec8] to-[#ccd9e6] pt-[2px]">
            <svg width="13" height="5"><rect x=".5" y=".5" width="12" height="4" rx="1" fill="#fff" stroke="#444b55" /></svg>
          </div>
          <div className="flex w-[27px] items-center justify-center border-r border-[#606c7a] bg-gradient-to-b from-[#d9dfe4] via-[#b4bec8] to-[#ccd9e6]">
            <svg width="12" height="10"><rect x=".5" y=".5" width="11" height="9" rx="1" fill="#fff" stroke="#444b55" /><rect x="4" y="3.500" width="4" height="3" fill="#a9b6c4" stroke="#444b55" /></svg>
          </div>
          <div className="flex w-[46px] items-center justify-center bg-gradient-to-b from-[#dc9a8e] via-[#bd3420] to-[#d8674a]">
            <svg width="13" height="11" viewBox="0 0 13 11"><path d="M2.500 1.500l8 8M10.500 1.500l-8 8" stroke="#5b4046" strokeWidth="4.400" /><path d="M2.500 1.500l8 8M10.500 1.500l-8 8" stroke="#fff" strokeWidth="2.600" /></svg>
          </div>
        </div>
      </div>
      <div className="relative flex grow rounded-[1px] border border-[#56647a] bg-[#efefef]">
        <Sidebar />
        <div className="ml-[15px] flex flex-col pt-[20px]">
          <TabBar />
          <ClipForm />
        </div>
        <svg width="12" height="12" className="absolute right-[1px] bottom-[1px]">
          {[[9, 0], [6, 3], [9, 3], [3, 6], [6, 6], [9, 6], [0, 9], [3, 9], [6, 9], [9, 9]].map(([x, y]) => <rect key={`${x}-${y}`} x={x} y={y} width="1" height="1" fill="#a8a8a8" />)}
        </svg>
      </div>
    </div>
  );
}

export default function App() {
  return (
    <div className="relative flex h-[747px] w-[1367px] flex-col overflow-hidden bg-[#efefef]">
      <MenuBar />
      <Toolbars />
      <div className="flex h-[614px] shrink-0">
        <IconStrip />
        <LayersDock />
        <div className="mb-[2px] ml-[6px] flex w-[641px] shrink-0 flex-col justify-end overflow-hidden border border-[#b5b5b5] bg-[#f2efe9]">
          <MapCanvas />
        </div>
        <div className="ml-[6px] flex"><RightDock /></div>
      </div>
      <div className="absolute top-0 right-0 h-[43px] w-[1px] bg-[#2d55a5]" />
      <Dialog />
    </div>
  );
}
